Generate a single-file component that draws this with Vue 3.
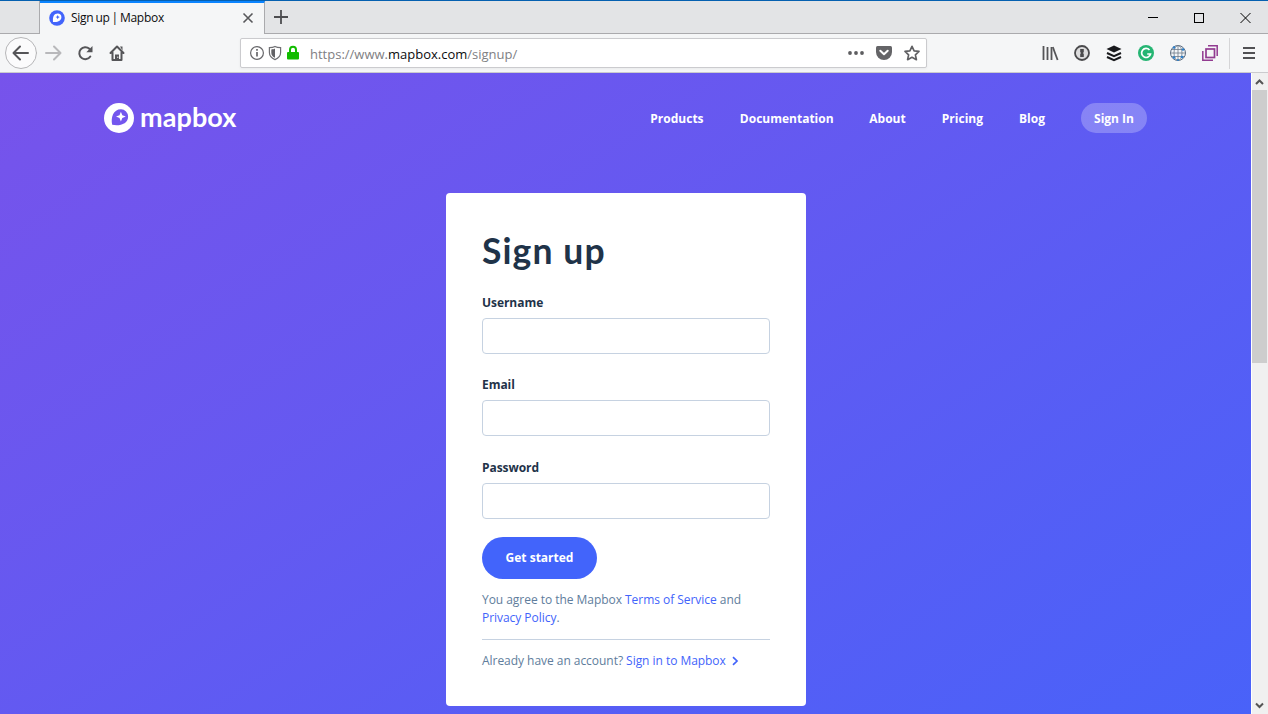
<script setup>
const navLinks = [
  { label: 'Products', w: 53.5 },
  { label: 'Documentation', w: 93.5 },
  { label: 'About', w: 36.5 },
  { label: 'Pricing', w: 41.2 },
  { label: 'Blog', w: 26 },
]
const fields = [
  { id: 'username', label: 'Username', type: 'text' },
  { id: 'email', label: 'Email', type: 'email' },
  { id: 'password', label: 'Password', type: 'password' },
]
</script>

<template>
  <div class="window">
    <header class="tabbar">
      <div class="tab-stub"></div>
      <div class="tab">
        <svg class="favicon" width="16" height="16" viewBox="0 0 16 16">
          <circle cx="8" cy="8" r="7.8" fill="#4264fb" />
          <path d="M4 12C3.4 7 5 3.6 8.8 3.6c2 0 3.600 1.500 3.600 3.500C12.400 11 8.500 12.600 4 12z" fill="#fff" />
          <path d="M8.700 4.900l.7 1.500 1.500.7-1.500.7-.7 1.500-.7-1.500-1.500-.7 1.500-.7z" fill="#4264fb" />
        </svg>
        <span class="tab-title">Sign up | Mapbox</span>
        <svg class="tab-close" width="12" height="12" viewBox="0 0 12 12" fill="none" stroke="#58585b" stroke-width="1.600"><path d="M1.500 1.500l9 9M10.500 1.500l-9 9" /></svg>
      </div>
      <svg class="new-tab" width="14" height="14" viewBox="0 0 14 14" fill="none" stroke="#4d4d50" stroke-width="1.800"><path d="M7 0v14M0 7h14" /></svg>
      <svg class="win-controls" width="104" height="14" viewBox="0 0 104 14" fill="none" stroke="#000">
        <path d="M0 7.500h10" />
        <rect x="46.500" y="3.500" width="9" height="9" />
        <path d="M92.500 3l10 10M102.500 3l-10 10" />
      </svg>
    </header>

    <div class="toolbar">
      <svg class="nav-icons" width="140" height="38" viewBox="0 0 140 38" fill="none" stroke-linecap="round" stroke-linejoin="round">
        <circle cx="21" cy="19" r="15.500" fill="#fbfbfc" stroke="#b6b6b8" />
        <path d="M28 19H14M20 12.500L13.500 19l6.500 6.500" stroke="#555558" stroke-width="2" />
        <path d="M46 19h14M54 12.500l6.500 6.500-6.500 6.500" stroke="#b8b8bb" stroke-width="2" />
        <path d="M90.300 22.500a6 6 0 1 1-.9-7.700" stroke="#555558" stroke-width="2" />
        <path d="M92.500 12v6.200h-6.200z" fill="#555558" />
        <path d="M110.500 19l6.500-6.500 6.500 6.500M112.500 18.500V26h9v-7.500" stroke="#555558" stroke-width="2" />
        <path d="M115 26v-5.500h4V26zM120 12.500h2.500v4z" fill="#555558" />
        <path d="M117.800 23v.5" stroke="#fff" stroke-width="1" />
      </svg>
      <div class="urlbar">
        <svg width="56" height="18" viewBox="0 0 56 18" fill="none">
          <circle cx="9" cy="9" r="6.400" stroke="#67676a" stroke-width="1.200" />
          <path d="M9 8v4.500M9 5v1.700" stroke="#67676a" stroke-width="1.700" />
          <path d="M27 2.500c-1.800 1-3.500 1.200-5.600 1.200v4.800c0 3.600 2.400 5.700 5.600 7.100 3.200-1.400 5.600-3.500 5.600-7.100V3.700c-2.100 0-3.800-.2-5.600-1.200z" stroke="#707073" stroke-width="1.200" />
          <path d="M27 4.600c-1.200.6-2.200.8-3.700.9v3.200c0 2.400 1.400 4 3.700 5.100z" fill="#626265" />
          <path d="M42 8V5.800a3 3 0 0 1 6 0V8" stroke="#12bc00" stroke-width="2" />
          <rect x="39" y="8" width="12" height="7.500" rx="1" fill="#12bc00" />
        </svg>
        <span class="url">https://www.<b>mapbox.com</b>/signup/</span>
        <svg class="url-actions" width="76" height="20" viewBox="0 0 76 20" fill="none">
          <g fill="#5d5d60"><circle cx="4" cy="10" r="1.900" /><circle cx="10" cy="10" r="1.900" /><circle cx="16" cy="10" r="1.900" /></g>
          <path d="M31.500 3h13Q46 3 46 4.500V9a8 8 0 0 1-16 0V4.500Q30 3 31.500 3z" fill="#646467" />
          <path d="M34.300 7.800L38 11.300l3.700-3.500" stroke="#fff" stroke-width="2" stroke-linecap="round" stroke-linejoin="round" />
          <path d="M66 3.300l2.100 4.500 4.900.6-3.600 3.400 1 4.900L66 14.300l-4.400 2.400 1-4.900L59 8.400l4.900-.6z" stroke="#606063" stroke-width="1.700" stroke-linejoin="round" />
        </svg>
      </div>
      <svg class="extensions" width="228" height="38" viewBox="0 0 228 38" fill="none">
        <path d="M4 12v14M8 13v13M12 13v13" stroke="#555558" stroke-width="1.800" transform="translate(-.5)" />
        <path d="M12.800 13l4.800 13" stroke="#555558" stroke-width="1.800" />
        <circle cx="42" cy="19" r="7" fill="#dcdcdd" stroke="#4a4a4c" stroke-width="1.800" />
        <path d="M40.200 15h3.600v3l-.8 1 .8 1v3h-3.600v-3l.8-1-.8-1z" fill="#4a4a4c" />
        <path d="M74 11.500l7.500 3.500-7.500 3.500-7.500-3.500z" fill="#18191c" />
        <path d="M67 19l7 3.200 7-3.200M67 23l7 3.200 7-3.200" stroke="#18191c" stroke-width="2" />
        <circle cx="106" cy="19" r="8" fill="#25b573" />
        <path d="M109.500 16a4.500 4.500 0 1 0 1 4h-3.300" stroke="#fff" stroke-width="1.700" />
        <circle cx="138" cy="19" r="7.500" fill="#f3f6f9" stroke="#5c6c80" />
        <g stroke="#6f7b89" stroke-width=".8"><path d="M138 11.500v15M130.500 19h15M132 15.500h12M132 22.500h12" /><ellipse cx="138" cy="19" rx="4" ry="7.500" /></g>
        <g fill="#2d80cb"><circle cx="134" cy="13.500" r="1.300" /><circle cx="143" cy="15.500" r="1.300" /><circle cx="134" cy="23.500" r="1.300" /><circle cx="142" cy="23" r="1.300" /><circle cx="138" cy="26" r="1.100" /></g>
        <g stroke="#923b91" stroke-width="1.700"><rect x="166" y="15" width="8.500" height="8.500" /><path d="M168 11.800h9.200V22M162.800 17v9.200H173" stroke-width="1.500" /></g>
        <path d="M189.500 4v31" stroke="#d5d5d7" />
        <path d="M203 14h12M203 19h12M203 24h12" stroke="#515154" stroke-width="2" />
      </svg>
    </div>

    <div class="viewport">
      <main class="page">
        <div class="site-header">
          <div class="brand">
            <svg width="30" height="30" viewBox="0 0 30 30">
              <circle cx="15" cy="15" r="15" fill="#fff" />
              <path d="M8.200 21.800C6.600 14.500 9.200 6.300 17 6.300a7.200 7.200 0 0 1 7.100 7.200c0 7.600-8.600 9.900-15.900 8.300z" fill="#7356ee" />
              <path d="M16.900 8.700l1.400 3.500 3.500 1.400-3.500 1.400-1.400 3.500-1.400-3.500-3.500-1.400 3.500-1.400z" fill="#fff" />
            </svg>
            <span class="wordmark">mapbox</span>
          </div>
          <nav>
            <a v-for="l in navLinks" :key="l.label" class="link" :style="{ width: l.w + 'px' }">{{ l.label }}</a>
            <a class="signin">Sign In</a>
          </nav>
        </div>

        <form class="card" @submit.prevent>
          <h1>Sign up</h1>
          <div v-for="f in fields" :key="f.id" class="field">
            <label :for="f.id">{{ f.label }}</label>
            <input :id="f.id" :type="f.type" />
          </div>
          <button>Get started</button>
          <p class="terms">You agree to the Mapbox <a>Terms of Service</a> and<br /><a>Privacy Policy</a>.</p>
          <p class="account">
            Already have an account? <a>Sign in to Mapbox</a>
            <svg width="7" height="10" viewBox="0 0 7 10" fill="none" stroke="#4264fb" stroke-width="1.700"><path d="M1 1.200L5 5 1 8.800" /></svg>
          </p>
        </form>
      </main>

      <div class="scrollbar">
        <svg width="17" height="17" viewBox="0 0 17 17" fill="none" stroke="#555" stroke-width="2"><path d="M5 11l3.500-3.500L12 11" /></svg>
        <div class="thumb"></div>
        <svg class="down" width="17" height="17" viewBox="0 0 17 17" fill="none" stroke="#555" stroke-width="2"><path d="M5 6.500L8.500 10 12 6.500" /></svg>
      </div>
    </div>
  </div>
</template>

<style>
html, body { overflow: hidden; }
</style>

<style scoped>
* { box-sizing: border-box; }
.window {
  width: 1268px;
  height: 714px;
  display: flex;
  flex-direction: column;
  overflow: hidden;
  font-family: "Open Sans", "Noto Sans", sans-serif;
}
.tabbar {
  height: 34px;
  flex: none;
  display: flex;
  background: #e3e4e6;
  border-top: 1px solid #0560b0;
  box-shadow: inset 0 -1px 0 #aaaaad;
}
.tab-stub { width: 40px; border-right: 1px solid #aaaaad; border-bottom: 1px solid #aaaaad; }
.tab {
  width: 225px;
  display: flex;
  align-items: center;
  padding: 0 10px 0 9px;
  background: #f5f6f7;
  border-top: 2px solid #0a84ff;
  border-right: 1px solid #aaaaad;
}
.tab-title { margin: -1px 0 0 6px; font-size: 12px; line-height: 16px; letter-spacing: -0.28px; word-spacing: -0.8px; color: #0c0c0d; white-space: nowrap; }
.favicon, .tab-close { margin-top: -1px; }
.tab-close { margin-left: auto; }
.new-tab { margin: 9px 0 0 9px; }
.win-controls { margin: 9px 16px 0 auto; }
.toolbar {
  height: 39px;
  flex: none;
  display: flex;
  align-items: flex-start;
  background: #f5f6f7;
  border-bottom: 1px solid #cbcbce;
}
.nav-icons { flex: none; }
.urlbar {
  width: 687px;
  height: 30px;
  margin: 4px 0 0 100px;
  padding: 0 4px 0 7px;
  display: flex;
  align-items: center;
  background: #fff;
  border: 1px solid #cbcbce;
  border-radius: 2px;
  box-shadow: 0 1px 3px rgba(0, 0, 0, .05);
}
.url { margin: 2px 0 0 6px; font-size: 13px; line-height: 18px; color: #808083; white-space: nowrap; }
.url b { font-weight: 400; color: #0c0c0d; }
.url-actions { margin-left: auto; }
.extensions { margin-left: 113px; flex: none; }
.viewport { flex: 1; display: flex; min-height: 0; }
.page {
  width: 1251px;
  padding: 30px 104px 0;
  background: linear-gradient(146deg, #7753eb 0%, #4264fb 100%) 0 0 / 1251px 860px no-repeat;
  overflow: hidden;
}
.site-header { height: 30px; display: flex; justify-content: space-between; }
.brand { display: flex; }
.wordmark {
  margin-left: 6px;
  font: 700 27px/27px Lato, sans-serif;
  letter-spacing: 0.1px;
  color: #fff;
}
nav { display: flex; align-items: center; gap: 36px; font-size: 12px; font-weight: 700; line-height: 32px; color: #fff; }
nav a { white-space: nowrap; }
nav .link { height: 30px; }
.signin { width: 66px; height: 30px; border-radius: 15px; background: rgba(255, 255, 255, .25); text-align: center; }
.card {
  width: 360px;
  height: 513px;
  margin: 60px 0 0 342px;
  padding: 36px;
  background: #fff;
  border-radius: 4px;
  color: #273d56;
}
h1 { margin: 0 0 19px; height: 45px; font: 700 35.5px/43px Lato, sans-serif; letter-spacing: 1.1px; color: #1f3349; white-space: nowrap; }
.field { display: flex; flex-direction: column; height: 82.4px; }
label { height: 25px; font-size: 12px; line-height: 20.6px; font-weight: 700; letter-spacing: -0.05px; color: #1f3349; }
input { width: 288px; height: 36px; border: 1px solid #c6d2e1; border-radius: 4px; background: #fff; outline: none; }
button {
  display: block;
  width: 115px;
  height: 42px;
  margin-top: -3.2px;
  padding: 0;
  border: 0;
  border-radius: 21px;
  background: #4264fb;
  color: #fff;
  font: 700 12px/42px "Open Sans", sans-serif;
}
p { margin: 0; font-size: 12px; line-height: 18px; letter-spacing: -0.04px; color: #607d9c; white-space: nowrap; }
p a { color: #4264fb; }
.terms { margin-top: 12px; padding-bottom: 12px; border-bottom: 1px solid #c6d2e1; }
.account { margin-top: 12px; }
.account svg { margin-left: 4px; vertical-align: -1px; }
.account svg { transform: translateX(2px); }
.scrollbar {
  width: 17px;
  display: flex;
  flex-direction: column;
  background: #f0f0f0;
  border-left: 1px solid #fff;
}
.scrollbar svg { flex: none; margin-left: -1px; }
.thumb { width: 15px; height: 273px; background: #cdcdcd; }
.scrollbar .down { margin-top: auto; }
</style>
